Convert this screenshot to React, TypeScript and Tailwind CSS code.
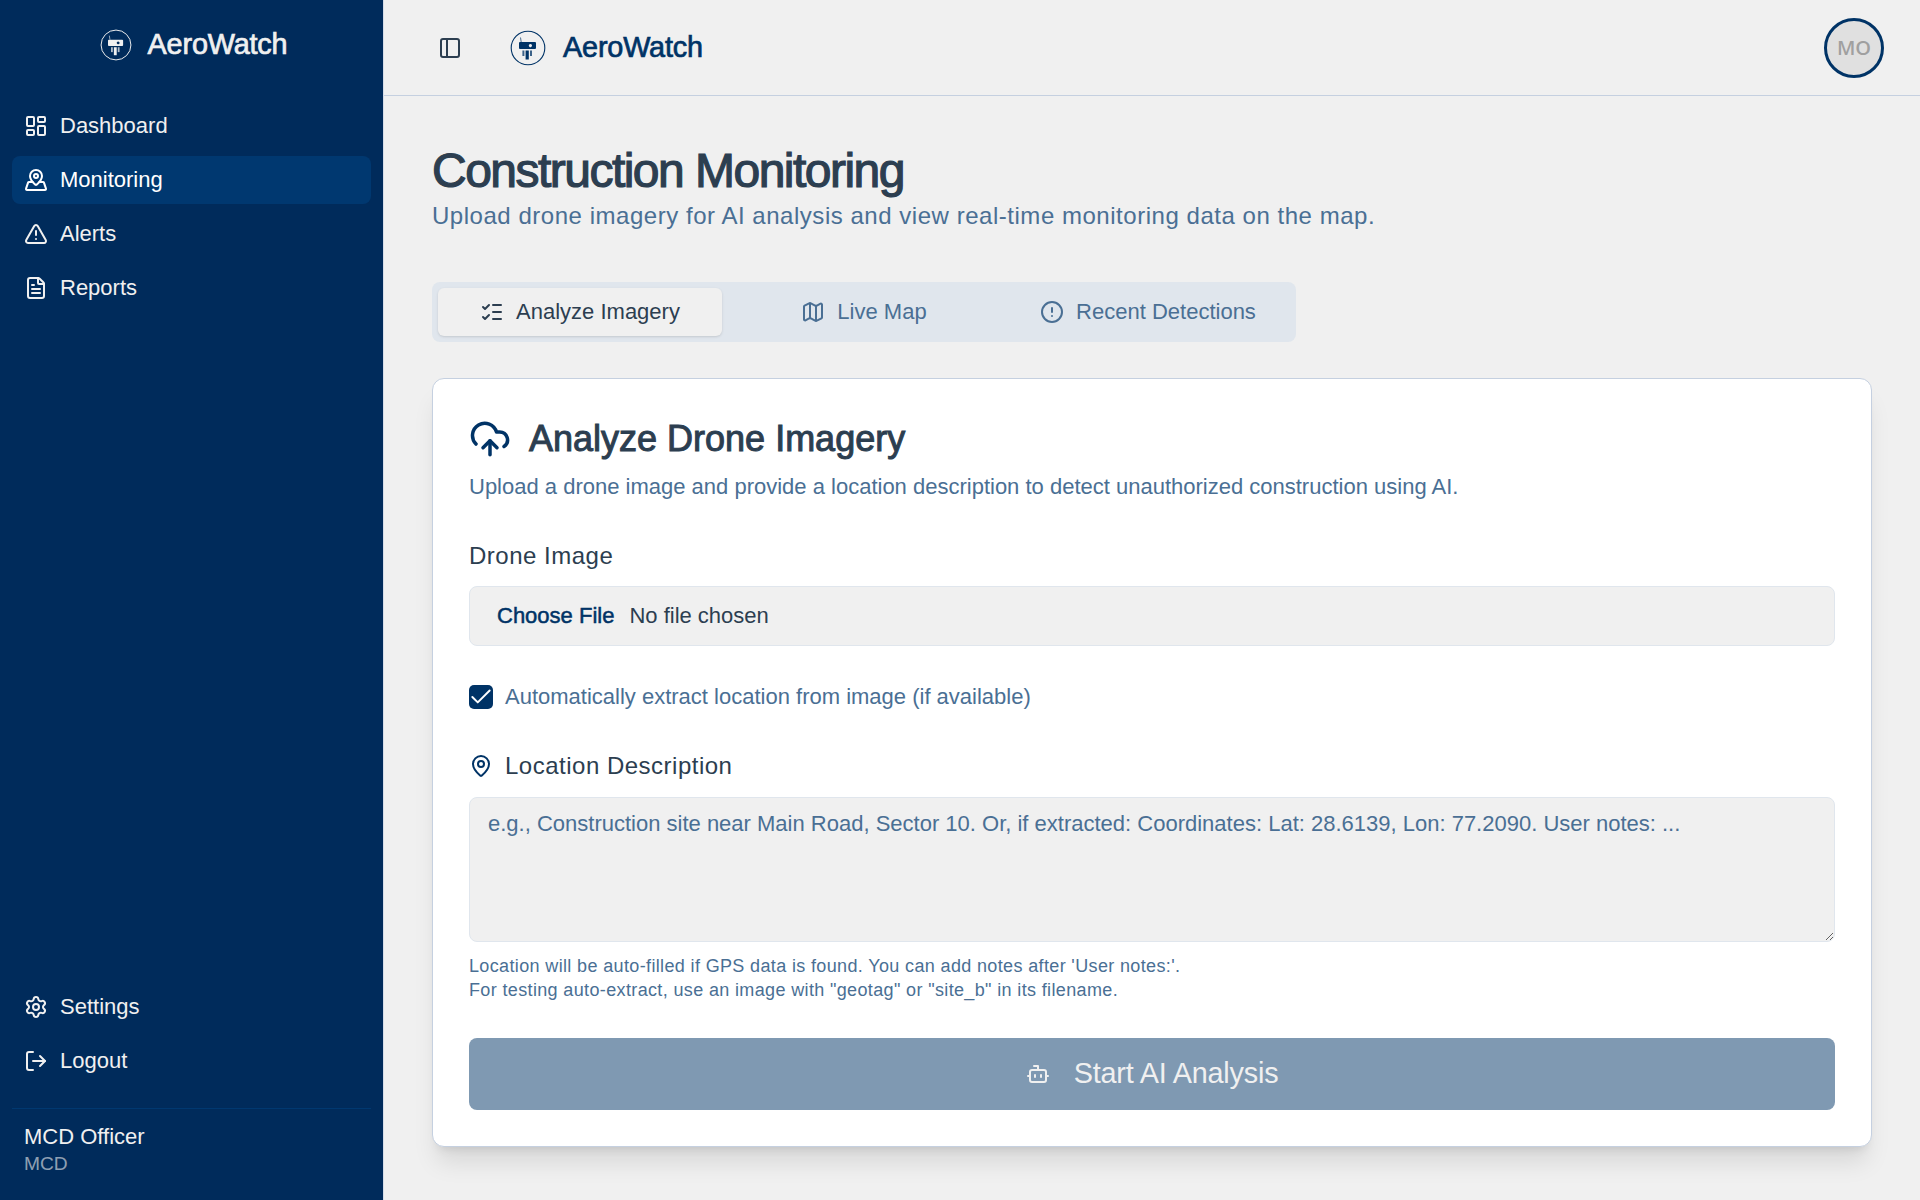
import {
  LayoutDashboard,
  MapPinned,
  TriangleAlert,
  FileText,
  Settings,
  LogOut,
  PanelLeft,
  ListChecks,
  Map,
  CircleAlert,
  CloudUpload,
  MapPin,
  Bot,
  Check,
} from 'lucide-react';

function Logo({ className }: { className: string }) {
  return (
    <svg viewBox="0 0 36 36" className={className} fill="none">
      <circle cx="18" cy="18" r="16.8" stroke="currentColor" strokeWidth="1.1" />
      <path d="M10.5 7.5 L11.2 12" stroke="currentColor" strokeWidth="0.7" />
      <path fillRule="evenodd" clipRule="evenodd" d="M10 12h15a1 1 0 0 1 1 1v5a1 1 0 0 1-1 1H10a1 1 0 0 1-1-1v-5a1 1 0 0 1 1-1Zm12 3.6a1.6 1.6 0 1 0 0 .01Z" fill="currentColor" />
      <rect x="12.4" y="20.5" width="2" height="5.5" fill="currentColor" opacity="0.75" />
      <rect x="15.6" y="20.5" width="3.2" height="9" fill="currentColor" />
      <rect x="20" y="20.5" width="2" height="5.5" fill="currentColor" opacity="0.75" />
    </svg>
  );
}

const topNav = [
  { label: 'Dashboard', icon: LayoutDashboard },
  { label: 'Monitoring', icon: MapPinned, active: true },
  { label: 'Alerts', icon: TriangleAlert },
  { label: 'Reports', icon: FileText },
];

const bottomNav = [
  { label: 'Settings', icon: Settings },
  { label: 'Logout', icon: LogOut },
];

function NavRow({ label, icon: Icon, active }: { label: string; icon: any; active?: boolean }) {
  return (
    <a className={`flex h-12 items-center gap-3 rounded-lg px-3 text-[22px] ${active ? 'bg-[#003870] text-white' : 'text-[#f0f0f0]'}`}>
      <Icon className="size-6 shrink-0" strokeWidth={2} />
      <span className="-mt-px">{label}</span>
    </a>
  );
}

function Sidebar() {
  return (
    <aside className="flex w-[384px] shrink-0 flex-col border-r border-[#d5dce8] bg-[#002b5b] text-[#f0f0f0]">
      <div className="flex h-[90px] items-center justify-center gap-4 pl-1">
        <Logo className="size-8 text-[#f0f0f0]" />
        <span className="text-[28.8px] tracking-[-0.17px] [-webkit-text-stroke:0.7px]">AeroWatch</span>
      </div>
      <nav className="mt-3 flex flex-col gap-1.5 px-3">
        {topNav.map((item) => (
          <NavRow key={item.label} {...item} />
        ))}
      </nav>
      <div className="mt-auto flex flex-col gap-1.5 px-3 pb-[23px]">
        {bottomNav.map((item) => (
          <NavRow key={item.label} {...item} />
        ))}
      </div>
      <div className="mx-3 border-t border-[#003870] px-3 pt-3.5 pb-6">
        <div className="text-[22px] leading-7">MCD Officer</div>
        <div className="mt-px text-[19.2px] leading-6 text-[#f0f0f0]/60">MCD</div>
      </div>
    </aside>
  );
}

function Header() {
  return (
    <header className="flex h-[96px] items-center border-b border-[#c5d0e0] pr-9 pl-[54px]">
      <PanelLeft className="size-6 text-[#2c3e50]" strokeWidth={2} />
      <div className="ml-[48px] flex items-center gap-[17px]">
        <Logo className="size-9 text-[#003366]" />
        <span className="mt-px text-[28.8px] tracking-[-0.17px] text-[#003366] [-webkit-text-stroke:0.7px]">AeroWatch</span>
      </div>
      <div className="ml-auto flex size-[60px] items-center justify-center rounded-full border-[3px] border-[#003366] bg-[#e0e0e0] font-['Open_Sans',sans-serif] text-[20px] font-semibold text-[#a0a0a0]">
        MO
      </div>
    </header>
  );
}

const tabs = [
  { label: 'Analyze Imagery', icon: ListChecks, active: true },
  { label: 'Live Map', icon: Map },
  { label: 'Recent Detections', icon: CircleAlert },
];

function Tabs() {
  return (
    <div className="mt-[50px] grid h-[60px] w-[864px] grid-cols-3 rounded-lg bg-[#e0e6ed] p-1.5">
      {tabs.map(({ label, icon: Icon, active }) => (
        <button
          key={label}
          className={`flex items-center justify-center gap-3 rounded-md text-[22px] ${active ? 'bg-[#f0f0f0] text-[#2c3e50] shadow-sm' : 'text-[#4a6f94]'}`}
        >
          <Icon className="size-6" strokeWidth={2} />
          <span className="-mt-0.5">{label}</span>
        </button>
      ))}
    </div>
  );
}

function UploadCard() {
  return (
    <section className="mt-9 rounded-xl border border-[#c5d0e0] bg-white p-9 shadow-xl">
      <h2 className="flex h-12 items-center gap-[18px] text-[36px] text-[#2c3e50] [-webkit-text-stroke:1px]">
        <CloudUpload className="size-[42px] text-[#003366] [-webkit-text-stroke:0]" strokeWidth={2} />
        Analyze Drone Imagery
      </h2>
      <p className="mt-2 text-[22px] leading-8 text-[#4a6f94]">
        Upload a drone image and provide a location description to detect unauthorized construction using AI.
      </p>

      <label className="mt-[37px] block text-[24px] leading-8 tracking-[0.5px] text-[#2c3e50]">Drone Image</label>
      <input
        type="file"
        className="mt-3.5 block h-[60px] w-full rounded-lg border border-[#e0e6ed] bg-[#f0f0f0] px-[15px] py-3 text-[22px] leading-[34px] text-[#2c3e50] file:mr-[3px] file:border-0 file:bg-transparent file:px-3 file:text-[22px] file:font-normal file:text-[#003366] file:[-webkit-text-stroke:0.5px]"
      />

      <div className="mt-[34px] flex items-center gap-3">
        <span className="flex size-6 items-center justify-center rounded-[5px] bg-[#003366] text-white">
          <Check className="size-[26px] shrink-0" strokeWidth={1.8} />
        </span>
        <span className="text-[22px] text-[#4a6f94]">Automatically extract location from image (if available)</span>
      </div>

      <label className="mt-[37px] flex h-8 items-center gap-3 text-[24px] tracking-[0.5px] text-[#2c3e50]">
        <MapPin className="size-6 text-[#003366]" strokeWidth={2} />
        Location Description
      </label>
      <textarea
        className="mt-[15px] block h-[145px] w-full rounded-lg border border-[#e0e6ed] bg-[#f0f0f0] px-[18px] py-3 text-[22px] leading-7 text-[#2c3e50] placeholder:text-[#4a6f94]"
        placeholder="e.g., Construction site near Main Road, Sector 10. Or, if extracted: Coordinates: Lat: 28.6139, Lon: 77.2090. User notes: ..."
      />
      <p className="mt-3 text-[18px] leading-6 tracking-[0.36px] text-[#4a6f94]">
        Location will be auto-filled if GPS data is found. You can add notes after 'User notes:'.
        <br />
        For testing auto-extract, use an image with "geotag" or "site_b" in its filename.
      </p>

      <button className="mt-9 flex h-[72px] w-full items-center justify-center gap-6 rounded-lg bg-[#7f99b2] text-[28.8px] tracking-[-0.2px] text-[#f0f0f0]">
        <Bot className="size-6" strokeWidth={2} />
        Start AI Analysis
      </button>
    </section>
  );
}

export default function App() {
  return (
    <div className="flex h-screen overflow-hidden bg-[#f0f0f0] font-['Liberation_Sans',Arial,sans-serif]">
      <Sidebar />
      <div className="flex min-w-0 flex-1 flex-col">
        <Header />
        <main className="flex-1 px-12 pt-[37px]">
          <h1 className="text-[48px] leading-[76px] tracking-[-1.52px] text-[#2c3e50] [-webkit-text-stroke:1.2px]">Construction Monitoring</h1>
          <p className="-mt-[9px] text-[24px] leading-8 tracking-[0.53px] text-[#4a6f94]">
            Upload drone imagery for AI analysis and view real-time monitoring data on the map.
          </p>
          <Tabs />
          <UploadCard />
        </main>
      </div>
    </div>
  );
}
